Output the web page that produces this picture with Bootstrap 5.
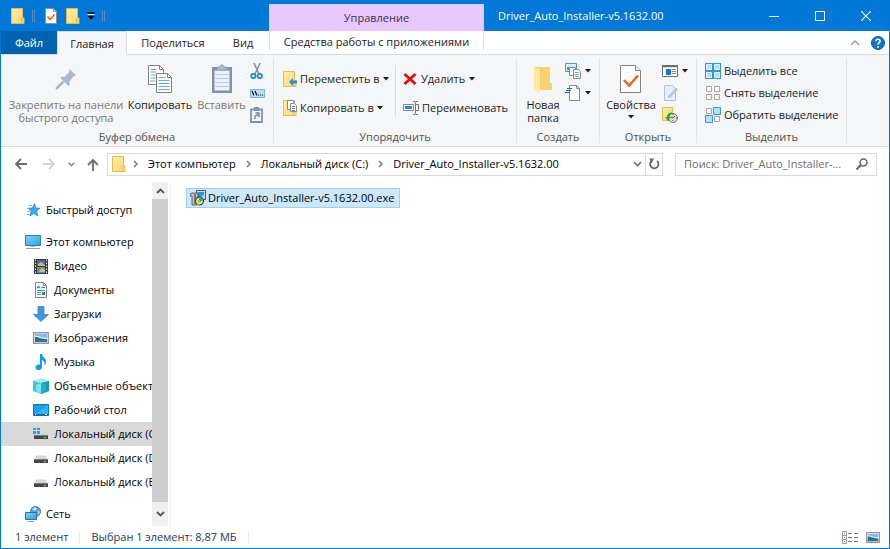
<!DOCTYPE html>
<html lang="ru">
<head>
<meta charset="utf-8">
<meta name="viewport" content="width=device-width, initial-scale=1">
<title>Driver_Auto_Installer-v5.1632.00</title>
<link href="https://cdn.jsdelivr.net/npm/bootstrap@5.3.0/dist/css/bootstrap.min.css" rel="stylesheet">
<style>
body{font-family:"Open Sans","Noto Sans",sans-serif;font-size:11px;line-height:16px;color:#1c1c1c;background:#fff}
svg{flex:none;display:block}
button{font:inherit;color:inherit;background:none;border:0;padding:0;white-space:nowrap}
a{color:inherit;text-decoration:none;white-space:nowrap}
.win{border:1px solid #0078d7;overflow:hidden}
.titlebar{background:#0078d7;height:30px;color:#fff}
.quick{width:268px;gap:7px;padding-left:10px}
.quick .gapped{margin-left:3px}
.quick .gapped + .gapped{margin-left:2px}
.caption-text{padding-left:14px}
.manage{background:#e8c8ff;color:#3f3349;width:215px;margin-top:3px}
.caption-btn{width:46px}
.tabs{height:24px;border-bottom:1px solid #dadbdc}
.tab-file{background:#0063b1;color:#fff;width:56px}
.tab-on{background:#f5f6f7;border:1px solid #dadbdc;border-bottom:0;width:70px;margin-bottom:-1px}
.tab-share{width:92px}
.tab-view{width:48px}
.tab-tools{width:215px;margin-left:2px;border:1px solid #dadbdc;border-width:0 1px;margin-bottom:4px;padding-top:2px}
.help-gap{gap:11px}
.ribbon{background:#f5f6f7;height:92px;border-bottom:1px solid #dadbdc}
.grp{border-right:1px solid #e2e3e4;margin:3px 0;flex:none}
.grp-title{color:#505050;line-height:12px}
.g1{width:273px}.g2{width:243px}.g3{width:83px}.g4{width:97px}.g5{width:150px}
.big{line-height:13px;padding-top:6px}
.big svg{margin:0 auto 2px}
.w-pin{width:126px;padding-left:4px}.w-copy{width:66px}.w-paste{width:57px}.w-new{width:36px}.w-prop{width:54px}
.dim{color:#787878}
.gap-i{gap:3px}
.small-col{padding-top:2px}
.small-col button{height:22px}
.mid-col{padding-top:6px}
.mid-col button{height:29px}
.mid-a{width:105px}
.g2-body{padding-left:9px}
.rule{width:1px;background:#dadbdc;margin:7px 7px 14px}
.navrow{height:34px;color:#000;padding-right:12px}
.arrows{gap:12px;padding-left:13px;width:106px}
.field{border:1px solid #d9d9d9;height:23px;background:#fff}
.crumbs{gap:10px}
.root{gap:7px}
.refresh{border-left:1px solid #d9d9d9;width:17px}
.search{width:202px;margin-left:12px}
.search input{border:0;outline:0;padding:0;min-width:0;color:#6d6d6d}
.search input::placeholder{color:#6d6d6d;opacity:1}
.main{height:calc(100vh - 205px);min-height:344px;padding-top:1px}
.side{width:151px;padding-top:16px;color:#000}
.side a{height:24px;gap:5px;padding-left:24px}
.side .sub{padding-left:32px}
.side .on{background:#d9d9d9}
.scroll{width:16px;background:#f0f0f0}
.scroll button{height:17px}
.scroll .end{height:24px}
.thumb{background:#cdcdcd}
.pane{border-left:1px solid #efefef;margin-left:2px;padding:6px 15px;color:#000}
.file{background:#cce8ff;border:1px solid #99d1ff;height:20px;padding:0 5px 0 3px;gap:2px}
.status{height:22px;color:#1e395b;padding:0 9px 0 14px}
.status .sep{border-left:1px solid #e9e9e9;height:12px;margin:0 11px}
</style>
<script src="https://cdn.jsdelivr.net/npm/bootstrap@5.3.0/dist/js/bootstrap.bundle.min.js"></script>
</head>
<body>
<svg width="0" height="0" class="position-absolute" aria-hidden="true">
<defs>
<linearGradient id="blueg" x1="0" y1="0" x2="1" y2="1"><stop offset="0" stop-color="#7fd4ff"/><stop offset="1" stop-color="#2a9fe8"/></linearGradient>
<linearGradient id="yel" x1="0" y1="0" x2="1" y2="1"><stop offset="0" stop-color="#ffeeb0"/><stop offset="1" stop-color="#ffd968"/></linearGradient>
<symbol id="folder" viewBox="0 0 14 16"><path d="M.5.5h11v9.500h1.500v5.500H.5z" fill="url(#yel)" stroke="#e5bd4d"/><path d="M10.500 15V10.500h2" fill="none" stroke="#e5bd4d"/></symbol>
<symbol id="caret" viewBox="0 0 6 4"><path d="M0 0h6L3 3.500z" fill="#1c1c1c"/></symbol>
<symbol id="chev" viewBox="0 0 5 8"><path d="M1 1l3 3-3 3" fill="none" stroke="#777" stroke-width="1.500"/></symbol>
<symbol id="drive" viewBox="0 0 16 16"><path d="M3.500 5.500h9l2 3.500h-13z" fill="#d4d7d9"/><path d="M1 9h14v4H1z" fill="#44494d"/><path d="M1 9h14v1H1z" fill="#777"/><path d="M11 11h2v1h-2z" fill="#46e06a"/></symbol>
<symbol id="picture" viewBox="0 0 16 12"><path d="M.7.700h14.600v10.600H.7z" fill="#fff" stroke="#999" stroke-width="1.400"/><path d="M2 2h12v4H2z" fill="#7eb8ee"/><path d="M2 4c3-1 5 2 12 2v1H2z" fill="#e6f3fb"/><path d="M2 5c4 0 5 2 12 2v3H2z" fill="#2e6f72"/><path d="M2 8h12v2H2z" fill="#2e72b4"/></symbol>
</defs>
</svg>
<div class="win d-flex flex-column min-vh-100">
 <header class="titlebar d-flex">
  <div class="quick d-flex align-items-center flex-shrink-0">
   <svg width="14" height="16"><use href="#folder"/></svg>
   <svg width="3" height="12"><path d="M.5 0v12M2.500 0v12" stroke="#5b8fc0"/></svg>
   <button class="gapped" aria-label="Свойства"><svg width="12" height="16"><path d="M.5.500h8l3 3v12H.5z" fill="#fff" stroke="#8d8d8d"/><path d="M8.500.5v3h3" fill="none" stroke="#999"/><path d="M2.500 8.500l2.500 3 4.500-5" stroke="#f26522" stroke-width="1.700" fill="none"/></svg></button>
   <button class="gapped" aria-label="Новая папка"><svg width="14" height="16"><use href="#folder"/></svg></button>
   <button aria-label="Настройка панели"><svg width="8" height="8"><path d="M.5 1h7" stroke="#000" stroke-width="1.500"/><path d="M.5 2.500h7" stroke="#fff"/><path d="M.5 4h7L4 7.500z" fill="#000"/></svg></button>
   <svg width="3" height="12"><path d="M.5 0v12M2.500 0v12" stroke="#5b8fc0"/></svg>
  </div>
  <div class="manage d-flex align-items-center justify-content-center flex-shrink-0">Управление</div>
  <div class="caption-text flex-grow-1 align-self-center text-truncate">Driver_Auto_Installer-v5.1632.00</div>
  <button class="caption-btn" aria-label="Свернуть"><svg class="mx-auto" width="10" height="10"><path d="M0 5.500h10" stroke="#fff"/></svg></button>
  <button class="caption-btn" aria-label="Развернуть"><svg class="mx-auto" width="10" height="10"><path d="M.5.500h9v9h-9z" fill="none" stroke="#fff"/></svg></button>
  <button class="caption-btn" aria-label="Закрыть"><svg class="mx-auto" width="10" height="10"><path d="M0 0l10 10M10 0L0 10" stroke="#fff" stroke-width="1.100"/></svg></button>
 </header>
 <nav class="tabs d-flex">
  <button class="tab-file">Файл</button>
  <button class="tab-on">Главная</button>
  <button class="tab-share">Поделиться</button>
  <button class="tab-view">Вид</button>
  <button class="tab-tools">Средства работы с приложениями</button>
  <div class="help-gap ms-auto d-flex align-items-center me-1">
   <button aria-label="Свернуть ленту"><svg width="10" height="6"><path d="M1 5l4-4 4 4" fill="none" stroke="#999" stroke-width="1.300"/></svg></button>
   <button aria-label="Справка"><svg width="14" height="14"><circle cx="7" cy="7" r="6.500" fill="#0f73cf" stroke="#0756a5"/><path d="M4.800 5.300c0-3 4.500-2.600 4.300 0C9 6.800 7 6.500 7 8.800M7 10v1.700" fill="none" stroke="#fff" stroke-width="1.500"/></svg></button>
  </div>
 </nav>
 <section class="ribbon d-flex" aria-label="Главная">
  <div class="grp g1 d-flex flex-column">
   <div class="d-flex flex-grow-1">
    <button class="big w-pin dim align-self-start"><svg width="30" height="32"><g transform="translate(5 5)"><path d="M13.500 0l6.500 6.500-2.500 1-4 5c.5 2 .2 3.700-.8 4.700L4 8.700c1.200-1 3-1.300 4.600-.8l4.500-4.900z" fill="#aab9ce"/><path d="M7.500 12.500L0 20" stroke="#aab9ce" stroke-width="2.500"/></g></svg>Закрепить на панели<br>быстрого доступа</button>
    <button class="big w-copy align-self-start"><svg width="26" height="32"><g fill="#fff" stroke="#828282"><path d="M1.500 1.500h11l4 4v15h-15z"/><path d="M9.500 9.500h11l4 4v15h-15z"/><path d="M12.500 1.500v4h4M20.500 9.500v4h4" fill="none"/></g><path d="M3.500 5.500h6m-6 2.500h6m-6 3h5m-5 3h5m-5 3h5M11.500 13.500h7m-7 3h11m-11 3h11m-11 3h11m-11 3h11" stroke="#6ca6ef"/></svg>Копировать</button>
    <button class="big w-paste dim align-self-start"><svg width="22" height="32"><path d="M1 3h20v26H1z" fill="#8292ae"/><path d="M3.500 6.500h15v20h-15z" fill="#edf1f8"/><path d="M3 10.500h16m-16 4h16m-16 4h16m-16 4h16" stroke="#bbc7da"/><path d="M6 6V3h3l1-2h2l1 2h3v3z" fill="#aebbd0" stroke="#8292ae" stroke-width=".8"/></svg>Вставить</button>
    <div class="small-col d-flex flex-column">
     <button aria-label="Вырезать"><svg width="14" height="17"><path d="M4 0l5 11M10 0L5 11" stroke="#8895aa" stroke-width="1.600"/><circle cx="3.400" cy="13" r="2.200" fill="none" stroke="#1788cf" stroke-width="1.700"/><circle cx="9.800" cy="13" r="2.200" fill="none" stroke="#1788cf" stroke-width="1.700"/></svg></button>
     <button aria-label="Скопировать путь"><svg width="15" height="9"><path d="M.5.500h14v8H.5z" fill="#b8def8" stroke="#75b5e2"/><path d="M2 2l2 4.500M5 2l2 4.500M8 6h1m1 0h1m1 0h1" stroke="#111" stroke-width="1.200"/></svg></button>
     <button aria-label="Вставить ярлык"><svg width="13" height="16"><path d="M1 2.500h11V15H1z" fill="#f5f7fb" stroke="#8292ae" stroke-width="1.800"/><path d="M4 0h5v4H4z" fill="#8292ae"/><path d="M5 12c-.5-3 .5-4 3-4M5.500 6H9v4" fill="none" stroke="#7184a5" stroke-width="1.500"/></svg></button>
    </div>
   </div>
   <div class="grp-title text-center">Буфер обмена</div>
  </div>
  <div class="grp g2 d-flex flex-column">
   <div class="g2-body d-flex flex-grow-1">
    <div class="mid-col mid-a d-flex flex-column align-items-start">
     <button class="d-flex align-items-center gap-i"><svg width="14" height="16"><use href="#folder"/><path d="M6 11l4-4v2.500h4v3h-4V15z" fill="#2b8bdb"/></svg>Переместить в<svg width="6" height="4"><use href="#caret"/></svg></button>
     <button class="d-flex align-items-center gap-i"><svg width="14" height="16"><use href="#folder"/><g fill="#fff" stroke="#888"><path d="M4.500.5h6v9h-6z"/><path d="M7.500 3.500h4l2 2v6h-6z"/></g><path d="M9 6.500h3m-3 2h3m-3 2h3" stroke="#4792db"/></svg>Копировать в<svg width="6" height="4"><use href="#caret"/></svg></button>
    </div>
    <div class="rule"></div>
    <div class="mid-col d-flex flex-column align-items-start">
     <button class="d-flex align-items-center gap-1"><svg width="14" height="14"><path d="M1.500 2l11 10M12.500 2L1.500 12" stroke="#d91414" stroke-width="3"/></svg>Удалить<svg width="6" height="4"><use href="#caret"/></svg></button>
     <button class="d-flex align-items-center gap-i"><svg width="16" height="16"><path d="M.5 4.500h10v6H.5z" fill="#fff" stroke="#888"/><path d="M2 6h7v3H2z" fill="#2b8bdb"/><path d="M10 1.500h2l.5.500.5-.5h2M12.500 2v12M10 14.500h2l.5-.5.5.500h2M13 4.500h2.500v6H13" stroke="#777" fill="none"/></svg>Переименовать</button>
    </div>
   </div>
   <div class="grp-title text-center">Упорядочить</div>
  </div>
  <div class="grp g3 d-flex flex-column">
   <div class="d-flex flex-grow-1">
    <button class="big w-new align-self-start ms-2"><svg width="22" height="32"><path d="M2 3h16v16h2v7H8L2 23z" fill="#f6d36d"/><path d="M2 3l6 2.500V29l-6-3z" fill="#ffe8a1"/></svg>Новая<br>папка</button>
    <div class="small-col d-flex flex-column ps-1">
     <button class="d-flex align-items-center gap-1" aria-label="Создать элемент"><svg width="16" height="16"><path d="M.5.500h11v8H.5z" fill="#d9eefa" stroke="#4a9ac6"/><path d="M2 4h8v3H2z" fill="#4b9bd1"/><path d="M4.500 4.500h6v8h-6z" fill="#fff" stroke="#888"/><path d="M8.500 6.500h5l2 2v7h-7z" fill="#fff" stroke="#888"/><path d="M10 9.500h4m-4 2h4m-4 2h4" stroke="#78a3cb"/></svg><svg width="6" height="4"><use href="#caret"/></svg></button>
     <button class="d-flex align-items-center gap-1" aria-label="Простой доступ"><svg width="16" height="16"><path d="M4.500.5h7l3 3v12h-10z" fill="#fff" stroke="#888"/><path d="M11.500.5v3h3" fill="none" stroke="#888"/><path d="M2 3.500h5M1 5.500h5M0 7.500h5" stroke="#1e6eb7"/></svg><svg width="6" height="4"><use href="#caret"/></svg></button>
    </div>
   </div>
   <div class="grp-title text-center">Создать</div>
  </div>
  <div class="grp g4 d-flex flex-column">
   <div class="d-flex flex-grow-1">
    <button class="big w-prop align-self-start ms-1"><svg width="22" height="32"><path d="M.5 1.500h15l5 5v22H.5z" fill="#fff" stroke="#828282"/><path d="M15.500 1.500v5h5" fill="#f1f1f1" stroke="#828282"/><path d="M4 16l5 5.500 9-10" fill="none" stroke="#f26522" stroke-width="2.600"/></svg>Свойства<svg class="mt-1" width="6" height="4"><use href="#caret"/></svg></button>
    <div class="small-col d-flex flex-column align-items-start ps-1">
     <button class="d-flex align-items-center gap-1" aria-label="Открыть"><svg width="16" height="12"><path d="M.5.500h15v11H.5z" fill="#fff" stroke="#6d6d6d"/><path d="M0 1.500h16" stroke="#6d6d6d" stroke-width="1.500"/><path d="M4 4h5v6H4z" fill="#0f78d4"/><path d="M10 4.500h4m-4 2h4m-4 2h4" stroke="#888"/></svg><svg width="6" height="4"><use href="#caret"/></svg></button>
     <button aria-label="Изменить"><svg width="16" height="16"><path d="M2.500.5h8l3 3v12h-11z" fill="#e7eef8" stroke="#b1c2dd"/><path d="M6 12l8-9 1.500 1.500-8 8.500z" fill="#bdcde5" stroke="#9eb3d2" stroke-width=".7"/></svg></button>
     <button aria-label="Журнал"><svg width="16" height="16"><path d="M.5.500h10v13H.5z" fill="url(#yel)" stroke="#e5bd4d"/><circle cx="11" cy="11" r="4.500" fill="#ddd" stroke="#777"/><path d="M13 9l-2 2-2-1m2-3v1m0 5v1m3-3h1" stroke="#555" fill="none"/><path d="M10 5.500C6 5.500 5 8 5 10H3l3 4 3-4H7.500C7.500 8 9 7 10 7z" fill="#27a83a"/></svg></button>
    </div>
   </div>
   <div class="grp-title text-center">Открыть</div>
  </div>
  <div class="grp g5 d-flex flex-column">
   <div class="small-col d-flex flex-column flex-grow-1 align-items-start ps-2">
    <button class="d-flex align-items-center gap-i"><svg width="16" height="16"><path d="M0 0h16v16H0z" fill="#3795df"/><path d="M1.500 1.500h5v5h-5zM9.500 1.500h5v5h-5zM1.500 9.500h5v5h-5zM9.500 9.500h5v5h-5z" fill="#b5defa" stroke="#e2f3ff"/></svg>Выделить все</button>
    <button class="d-flex align-items-center gap-i"><svg width="16" height="16"><path d="M1.500 1.500h5v5h-5zM9.500 1.500h5v5h-5zM1.500 9.500h5v5h-5zM9.500 9.500h5v5h-5z" fill="#fff" stroke="#a5a5a5"/></svg>Снять выделение</button>
    <button class="d-flex align-items-center gap-i"><svg width="16" height="16"><path d="M1.500 1.500h5v5h-5zM9.500 9.500h5v5h-5z" fill="#fff" stroke="#a5a5a5"/><path d="M8.500.5h7v7h-7zM.5 8.500h7v7h-7z" fill="#b5defa" stroke="#3795df"/></svg>Обратить выделение</button>
   </div>
   <div class="grp-title text-center">Выделить</div>
  </div>
 </section>
 <div class="navrow d-flex align-items-center">
  <div class="arrows d-flex align-items-center flex-shrink-0">
   <button aria-label="Назад"><svg width="13" height="12"><path d="M13 6H2M7 1L2 6l5 5" fill="none" stroke="#6c6c6c" stroke-width="1.800"/></svg></button>
   <button class="ms-1" aria-label="Вперёд"><svg width="13" height="12"><path d="M0 6h11M6 1l5 5-5 5" fill="none" stroke="#d2d2d2" stroke-width="1.800"/></svg></button>
   <button aria-label="Последние расположения"><svg width="7" height="5"><path d="M.7.700l2.800 3 2.800-3" fill="none" stroke="#888" stroke-width="1.500"/></svg></button>
   <button aria-label="Вверх"><svg width="12" height="13"><path d="M6 13V2M1 7l5-5 5 5" fill="none" stroke="#6c6c6c" stroke-width="1.800"/></svg></button>
  </div>
  <div class="crumbs field d-flex align-items-center flex-grow-1 ps-1">
   <div class="root d-flex align-items-center">
    <svg width="14" height="16"><use href="#folder"/></svg>
    <svg width="5" height="8"><use href="#chev"/></svg>
   </div>
   <a href="#">Этот компьютер</a>
   <svg width="5" height="8"><use href="#chev"/></svg>
   <a href="#">Локальный диск (C:)</a>
   <svg width="5" height="8"><use href="#chev"/></svg>
   <a href="#" class="me-auto">Driver_Auto_Installer-v5.1632.00</a>
   <div class="d-flex align-self-stretch gap-i">
    <button aria-label="Предыдущие расположения"><svg width="9" height="6"><path d="M1 1l3.500 3.700L8 1" fill="none" stroke="#666" stroke-width="1.600"/></svg></button>
    <button class="refresh" aria-label="Обновить"><svg class="mx-auto" width="11" height="12"><path d="M2.800 2.800A4.200 4.200 0 1 0 8 3" fill="none" stroke="#666" stroke-width="1.700"/><path d="M6 .5h4.500L8.500 5.500z" fill="#666" transform="matrix(-1 0 0 1 11 0)"/></svg></button>
   </div>
  </div>
  <div class="search field d-flex align-items-center ps-2 pe-2 flex-shrink-0">
   <input class="flex-grow-1" type="text" aria-label="Поиск" placeholder="Поиск: Driver_Auto_Installer-...">
   <svg width="12" height="12"><circle cx="7.500" cy="4.500" r="3.500" fill="none" stroke="#666" stroke-width="1.500"/><path d="M5 7l-4.500 4.500" stroke="#666" stroke-width="2"/></svg>
  </div>
 </div>
 <main class="main d-flex flex-grow-1">
  <nav class="side flex-shrink-0 overflow-hidden">
   <a href="#" class="d-flex align-items-center mb-2"><svg width="16" height="16"><path d="M9.500 1.500l1.200 4.500 4.300.2-3.500 2.900 1.300 4.900-4-2.500-4 2.500 1.400-4.900L3 6.300 7.500 6z" fill="#3daaf0" stroke="#1a82c8" stroke-width=".7"/><path d="M4 3.500h3M2 6.500h2M2 9.500h3M2 12.500h2" stroke="#6cb9e8"/></svg>Быстрый доступ</a>
   <a href="#" class="d-flex align-items-center"><svg width="16" height="16"><path d="M.5 1.500h15v10H.5z" fill="url(#blueg)" stroke="#3b7ca5"/><path d="M6 12h4v1H6z" fill="#a8bac5"/><path d="M1 14.500h14" stroke="#8da3b3"/></svg>Этот компьютер</a>
   <a href="#" class="sub d-flex align-items-center"><svg width="16" height="16"><path d="M1 1h14v15H1z" fill="#3a3a3a"/><path d="M4 2h8v6H4z" fill="#356fbc"/><path d="M4 9h8v6H4z" fill="#4a90d6"/><path d="M5 6l3-2 4 3v1H5zM6 13l3-3 3 2v2H6z" fill="#e9b93c"/><path d="M2.500 1.500v14M13.500 1.500v14" stroke="#e6e6e6" stroke-dasharray="1.500 1.500"/></svg>Видео</a>
   <a href="#" class="sub d-flex align-items-center"><svg width="16" height="16"><path d="M2.500.5h8l3 3v12h-11z" fill="#fff" stroke="#828282"/><path d="M10.500.5v3h3" fill="none" stroke="#828282"/><path d="M4 6.500l1.500-3L7 6.500M4.500 5.500h2M8 5.500h4M4 8.500h8M4 10.500h4M4 12.500h4" fill="none" stroke="#3a8fc9"/><path d="M9 10h3v3H9z" fill="#3b7f8c"/></svg>Документы</a>
   <a href="#" class="sub d-flex align-items-center"><svg width="16" height="16"><path d="M5 .5h6v8h4.500L8 15.500.5 8.500H5z" fill="#3d97e3" stroke="#2b7bc4" stroke-width=".7"/></svg>Загрузки</a>
   <a href="#" class="sub d-flex align-items-center"><svg width="16" height="12"><use href="#picture"/></svg>Изображения</a>
   <a href="#" class="sub d-flex align-items-center"><svg width="16" height="16"><path d="M7 0h2c0 3 4 4 4 7.500 0 1.500-.5 3-1.500 4 .5-3-.5-4.500-2.500-5.500v7c0 4-6.500 4-6.500.3C2.500 11 5 10 7 10.800z" fill="#119bf0"/></svg>Музыка</a>
   <a href="#" class="sub d-flex align-items-center"><svg width="16" height="16"><path d="M0 3l8-2.500L16 3v10l-8 3-8-3z" fill="#3fc4d6"/><path d="M0 3l8-2.500L16 3 8 5z" fill="#a5edf2"/><path d="M8 5l8-2v10l-8 3z" fill="#159db8"/><path d="M3 7l5-2v11l-5-3z" fill="#7ce6ee"/><path d="M8 5l5 1v6l-5 4z" fill="#28afc5"/></svg>Объемные объекты</a>
   <a href="#" class="sub d-flex align-items-center"><svg width="16" height="12"><path d="M.5.500h15v11H.5z" fill="#17a1f3" stroke="#0a73c0"/><path d="M1 11L15 1v10z" fill="#34b4fb"/><path d="M1 10.500h14" stroke="#0a60a8"/><path d="M2 10.500h1m9 0h2" stroke="#fff"/></svg>Рабочий стол</a>
   <a href="#" class="sub on d-flex align-items-center"><svg width="16" height="16"><use href="#drive"/><path d="M0 2h3v2H0zM4 2h3v2H4zM0 5h3v3H0zM4 5h3v3H4z" fill="#15aaf0"/></svg>Локальный диск (C:)</a>
   <a href="#" class="sub d-flex align-items-center"><svg width="16" height="16"><use href="#drive"/></svg>Локальный диск (D:)</a>
   <a href="#" class="sub d-flex align-items-center mb-2"><svg width="16" height="16"><use href="#drive"/></svg>Локальный диск (E:)</a>
   <a href="#" class="d-flex align-items-center"><svg width="16" height="16"><circle cx="10.500" cy="5.500" r="5" fill="#5e9fc8" stroke="#447e9e"/><path d="M7 3l3-2 2 2-2 2zm6 1l2 2-2 3z" fill="#c5dfe9"/><path d="M.5 6.500h11v7H.5z" fill="url(#blueg)" stroke="#2475af"/><path d="M3 15.500h6" stroke="#8198a8"/></svg>Сеть</a>
  </nav>
  <div class="scroll d-flex flex-column flex-shrink-0">
   <button aria-label="Прокрутить вверх"><svg class="mx-auto" width="9" height="6"><path d="M1 5l3.500-3.500L8 5" fill="none" stroke="#555" stroke-width="1.800"/></svg></button>
   <div class="thumb flex-grow-1"></div>
   <button class="end" aria-label="Прокрутить вниз"><svg class="mx-auto" width="9" height="6"><path d="M1 1l3.500 3.500L8 1" fill="none" stroke="#555" stroke-width="1.800"/></svg></button>
  </div>
  <section class="pane flex-grow-1">
   <button class="file d-flex align-items-center"><svg width="16" height="16"><path d="M6.500.5h9v9h-9z" fill="#d7d7d7" stroke="#555"/><path d="M8 2h6v6H8z" fill="#159be8"/><path d="M10 8l4-4v4z" fill="#81d7ff"/><path d="M0 4l2-1h6v3l-1 9H2V6H0z" fill="#c3c3c3" stroke="#444" stroke-width=".8"/><path d="M5 4v10" stroke="#333"/><circle cx="9.500" cy="11" r="4" fill="#e8e8c3" stroke="#222"/><path d="M9 7a4 4 0 0 1 4 4H9z" fill="#31bc45"/><path d="M6 11h3v4a4 4 0 0 1-3-4z" fill="#d9df35"/><circle cx="9.500" cy="11" r="1" fill="#fff" stroke="#333" stroke-width=".5"/></svg>Driver_Auto_Installer-v5.1632.00.exe</button>
  </section>
 </main>
 <footer class="status d-flex align-items-center">
  <span>1 элемент</span><span class="sep"></span><span>Выбран 1 элемент: 8,87 МБ</span><span class="sep"></span>
  <button class="ms-auto me-2" aria-label="Таблица"><svg width="16" height="13"><path d="M.5.500h4v12h-4zM.5 4.500h4m-4 4h4" fill="#fff" stroke="#999"/><path d="M6 2.500h4m2 0h4M6 6.500h4m2 0h4M6 10.500h4m2 0h4" stroke="#777"/><path d="M2 2.500h1" stroke="#3b9b68"/><path d="M2 6.500h1" stroke="#3b7bdb"/><path d="M2 10.500h1" stroke="#d33"/></svg></button>
  <button aria-label="Крупные значки"><svg width="14" height="11" viewBox="0 0 16 12" preserveAspectRatio="none"><use href="#picture" width="16" height="12"/></svg></button>
 </footer>
</div>
</body>
</html>
